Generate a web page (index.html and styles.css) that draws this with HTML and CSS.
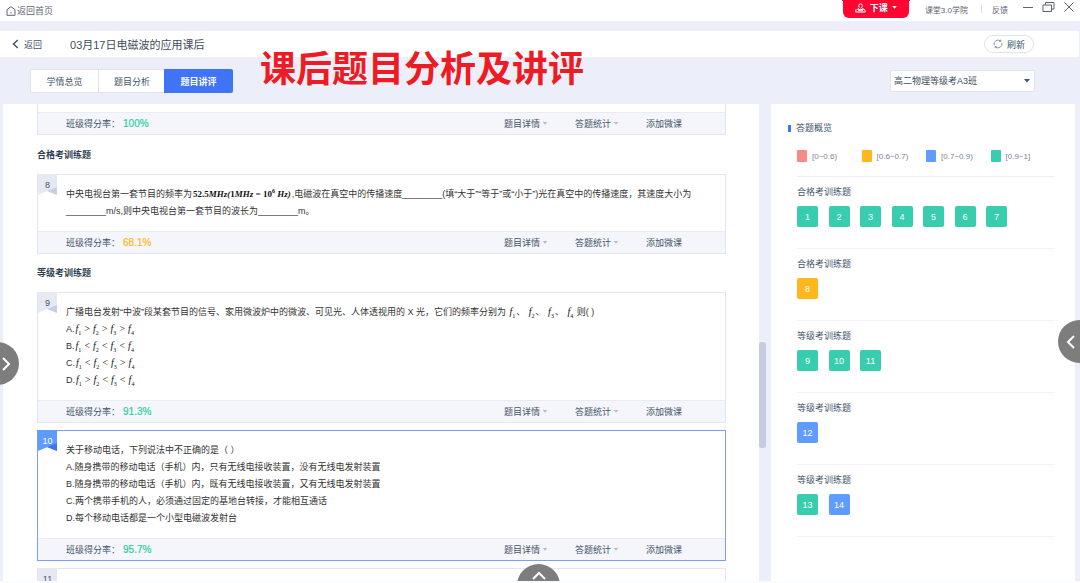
FILE: index.html
```
<!DOCTYPE html>
<html lang="zh-CN">

<head>
  <meta charset="UTF-8">
  <meta name="viewport" content="width=device-width, initial-scale=1.0">
  <title>03月17日电磁波的应用课后</title>
  <link rel="stylesheet" href="styles.css">
</head>

<body>

  <!-- shared shapes -->
  <svg class="defs" width="0" height="0" aria-hidden="true">
    <symbol id="ribbon" viewBox="0 0 19 21">
      <path class="ribbon-main" d="M0 0H19V21L9.500 17L0 21Z" />
      <path class="ribbon-fold" d="M9 17L19 13V21Z" />
    </symbol>
    <symbol id="caret" viewBox="0 0 6 4">
      <path d="M0 0H6L3 3.500Z" />
    </symbol>
  </svg>

  <header class="topbar">
    <a href="#" class="home">
      <svg width="10" height="10" viewBox="0 0 10 10"><path d="M1 3.600L5 .7L9 3.600V9.300H1ZM5 6V7.500" /></svg>
      返回首页
    </a>
    <div class="topbar-right">
      <button type="button" class="end-class">
        <svg width="11" height="10" viewBox="0 0 11 10"><path d="M3.800 4V2.500A1.700 1.700 0 0 1 7.200 2.500V3.500Q7 5 5.500 5.200M4.200 4.500L2.600 6.500H8.700L7.500 5M1 6.200L.7 9H10.300L9.500 6.200M3 7.700H8" /></svg>
        下课
        <svg class="caret" width="5" height="3"><use href="#caret" /></svg>
      </button>
      <a href="#" class="top-link">课堂3.0学院</a>
      <span class="sep"></span>
      <a href="#" class="top-link">反馈</a>
      <div class="window-buttons">
        <button type="button" aria-label="最小化"><svg width="12" height="12" viewBox="0 0 12 12"><path d="M1 6.500H11" /></svg></button>
        <button type="button" aria-label="还原"><svg width="13" height="12" viewBox="0 0 13 12"><path d="M1 4H9.500V10.500H1ZM3.500 4V1.500H12V8H9.500" /></svg></button>
        <button type="button" aria-label="关闭"><svg width="12" height="12" viewBox="0 0 12 12"><path d="M1.500 1.500L10.500 10.500M10.500 1.500L1.500 10.500" /></svg></button>
      </div>
    </div>
  </header>

  <div class="titlebar">
    <a href="#" class="back">
      <svg width="7" height="10" viewBox="0 0 7 10"><path d="M5.800 1L1.500 5L5.800 9" /></svg>
      返回
    </a>
    <h1>03月17日电磁波的应用课后</h1>
    <button type="button" class="refresh">
      <svg width="10" height="10" viewBox="0 0 10 10"><path d="M1.200 6.200A4 4 0 0 1 7.500 1.900M8.800 3.800A4 4 0 0 1 2.500 8.100M6.200 2.500L8 2.200L7.500 .7M3.800 7.500L2 7.800L2.500 9.300" /></svg>
      刷新
    </button>
  </div>

  <div class="toolbar">
    <nav class="tabs">
      <button type="button">学情总览</button>
      <button type="button">题目分析</button>
      <button type="button" class="active">题目讲评</button>
    </nav>
    <div class="class-select">
      <select aria-label="班级">
        <option>高二物理等级考A3班</option>
      </select>
      <svg class="caret" width="6" height="4"><use href="#caret" /></svg>
    </div>
  </div>

  <div class="banner">课后题目分析及讲评</div>

  <div class="content">
    <main class="questions">

      <article class="card cut">
        <div class="card-body"></div>
        <footer class="card-footer">
          <span>班级得分率：</span><b class="rate">100%</b>
          <div class="actions">
            <button type="button">题目详情<svg class="caret" width="6" height="3"><use href="#caret" /></svg></button>
            <button type="button">答题统计<svg class="caret" width="6" height="3"><use href="#caret" /></svg></button>
            <button type="button">添加微课</button>
          </div>
        </footer>
      </article>

      <h2>合格考训练题</h2>

      <article class="card">
        <div class="badge"><svg><use href="#ribbon" /></svg><span>8</span></div>
        <div class="card-body">
          <p>中央电视台第一套节目的频率为<span class="math strong"><span class="num">52.5</span>MHz(<span class="num">1</span>MHz = <span class="num">10</span><sup>6</sup> Hz)</span>,电磁波在真空中的传播速度________(填“大于”“等于”或“小于”)光在真空中的传播速度，其速度大小为</p>
          <p>________m/s,则中央电视台第一套节目的波长为________m。</p>
        </div>
        <footer class="card-footer">
          <span>班级得分率：</span><b class="rate mid">68.1%</b>
          <div class="actions">
            <button type="button">题目详情<svg class="caret" width="6" height="3"><use href="#caret" /></svg></button>
            <button type="button">答题统计<svg class="caret" width="6" height="3"><use href="#caret" /></svg></button>
            <button type="button">添加微课</button>
          </div>
        </footer>
      </article>

      <h2>等级考训练题</h2>

      <article class="card">
        <div class="badge"><svg><use href="#ribbon" /></svg><span>9</span></div>
        <div class="card-body">
          <p>广播电台发射“中波”段某套节目的信号、家用微波炉中的微波、可见光、人体透视用的 X 光，它们的频率分别为 <i class="math">f<sub>1</sub></i>、 <i class="math">f<sub>2</sub></i>、 <i class="math">f<sub>3</sub></i>、 <i class="math">f<sub>4</sub></i> 则( )</p>
          <p>A.<span class="math">f<sub>1</sub> &gt; f<sub>2</sub> &gt; f<sub>3</sub> &gt; f<sub>4</sub></span></p>
          <p>B.<span class="math">f<sub>1</sub> &lt; f<sub>2</sub> &lt; f<sub>3</sub> &lt; f<sub>4</sub></span></p>
          <p>C.<span class="math">f<sub>1</sub> &lt; f<sub>2</sub> &lt; f<sub>3</sub> &gt; f<sub>4</sub></span></p>
          <p>D.<span class="math">f<sub>1</sub> &gt; f<sub>2</sub> &lt; f<sub>3</sub> &lt; f<sub>4</sub></span></p>
        </div>
        <footer class="card-footer">
          <span>班级得分率：</span><b class="rate">91.3%</b>
          <div class="actions">
            <button type="button">题目详情<svg class="caret" width="6" height="3"><use href="#caret" /></svg></button>
            <button type="button">答题统计<svg class="caret" width="6" height="3"><use href="#caret" /></svg></button>
            <button type="button">添加微课</button>
          </div>
        </footer>
      </article>

      <article class="card selected">
        <div class="badge"><svg><use href="#ribbon" /></svg><span>10</span></div>
        <div class="card-body">
          <p>关于移动电话，下列说法中不正确的是（ ）</p>
          <p>A.随身携带的移动电话（手机）内，只有无线电接收装置，没有无线电发射装置</p>
          <p>B.随身携带的移动电话（手机）内，既有无线电接收装置，又有无线电发射装置</p>
          <p>C.两个携带手机的人，必须通过固定的基地台转接，才能相互通话</p>
          <p>D.每个移动电话都是一个小型电磁波发射台</p>
        </div>
        <footer class="card-footer">
          <span>班级得分率：</span><b class="rate">95.7%</b>
          <div class="actions">
            <button type="button">题目详情<svg class="caret" width="6" height="3"><use href="#caret" /></svg></button>
            <button type="button">答题统计<svg class="caret" width="6" height="3"><use href="#caret" /></svg></button>
            <button type="button">添加微课</button>
          </div>
        </footer>
      </article>

      <article class="card">
        <div class="badge"><svg><use href="#ribbon" /></svg><span>11</span></div>
        <div class="card-body"></div>
      </article>
    </main>

    <div class="scrollbar"><div class="thumb"></div></div>

    <aside class="overview">
      <h3>答题概览</h3>
      <ul class="legend">
        <li><i class="red"></i>[0~0.6)</li>
        <li><i class="yellow"></i>[0.6~0.7)</li>
        <li><i class="blue"></i>[0.7~0.9)</li>
        <li><i class="green"></i>[0.9~1]</li>
      </ul>
      <section>
        <h4>合格考训练题</h4>
        <div class="tiles">
          <button type="button" class="green">1</button>
          <button type="button" class="green">2</button>
          <button type="button" class="green">3</button>
          <button type="button" class="green">4</button>
          <button type="button" class="green">5</button>
          <button type="button" class="green">6</button>
          <button type="button" class="green">7</button>
        </div>
      </section>
      <section>
        <h4>合格考训练题</h4>
        <div class="tiles">
          <button type="button" class="yellow">8</button>
        </div>
      </section>
      <section>
        <h4>等级考训练题</h4>
        <div class="tiles">
          <button type="button" class="green">9</button>
          <button type="button" class="green">10</button>
          <button type="button" class="green">11</button>
        </div>
      </section>
      <section>
        <h4>等级考训练题</h4>
        <div class="tiles">
          <button type="button" class="blue">12</button>
        </div>
      </section>
      <section>
        <h4>等级考训练题</h4>
        <div class="tiles">
          <button type="button" class="green">13</button>
          <button type="button" class="blue">14</button>
        </div>
      </section>
    </aside>
  </div>

  <!-- floating page controls -->
  <button type="button" class="round left" aria-label="展开左侧"><svg width="10" height="14" viewBox="0 0 10 14"><path d="M2 1L8 7L2 13" /></svg></button>
  <button type="button" class="round right" aria-label="展开右侧"><svg width="10" height="14" viewBox="0 0 10 14"><path d="M8 1L2 7L8 13" /></svg></button>
  <button type="button" class="round bottom" aria-label="展开底部"><svg width="14" height="10" viewBox="0 0 14 10"><path d="M1 8L7 2L13 8" /></svg></button>

</body>

</html>
```
FILE: styles.css
```
* {
  box-sizing: border-box;
}

body {
  margin: 0;
  height: 100vh;
  display: flex;
  flex-direction: column;
  overflow: hidden;
  position: relative;
  border-bottom: 2px solid #fbfcff;
  background: #eceff9;
  color: #44546a;
  font-family: "Liberation Sans", "Noto Sans CJK SC", sans-serif;
  font-size: 9px;
}

h1, h2, h3, h4, p, ul {
  margin: 0;
  padding: 0;
}

button {
  padding: 0;
  border: none;
  background: none;
  color: inherit;
  font: inherit;
  cursor: pointer;
}

a {
  color: inherit;
  text-decoration: none;
}

svg {
  flex: none;
  fill: none;
  stroke: currentColor;
}

.defs {
  position: absolute;
}

.caret {
  fill: currentColor;
  stroke: none;
}

/* top bar */
.topbar {
  flex: none;
  display: flex;
  justify-content: space-between;
  height: 21px;
  padding: 0 5px 0 6px;
  background: #fff;
  color: #5f6673;
}

.home {
  display: flex;
  align-items: center;
  gap: 1px;
}

.topbar-right {
  display: flex;
  align-items: center;
  height: 18px;
}

.end-class {
  position: relative;
  display: flex;
  align-items: center;
  justify-content: center;
  gap: 4px;
  width: 66px;
  height: 18px;
  padding-bottom: 3px;
  margin-right: 16px;
  border-radius: 0 0 6px 6px;
  background: #ff0532;
  color: #fff;
  font-weight: bold;
}

/* flared corners where the tab meets the window edge */
.end-class::before,
.end-class::after {
  content: "";
  position: absolute;
  top: 0;
  width: 3px;
  height: 3px;
}

.end-class::before {
  right: 100%;
  background: radial-gradient(circle at 0 100%, transparent 3px, #ff0532 3px);
}

.end-class::after {
  left: 100%;
  background: radial-gradient(circle at 100% 100%, transparent 3px, #ff0532 3px);
}

.top-link {
  font-size: 8px;
}

.sep {
  width: 1px;
  height: 8px;
  margin: 0 10px 0 13px;
  background: #dcdfe6;
}

.window-buttons {
  display: flex;
  gap: 8px;
  margin-left: 14px;
  padding-bottom: 4px;
  color: #5c6575;
}

.window-buttons button,
.window-buttons svg {
  display: block;
}

/* title bar */
.titlebar {
  flex: none;
  display: flex;
  align-items: center;
  height: 26px;
  margin: 10px 1px 0 0;
  padding: 0 45px 0 12px;
  background: #fff;
}

.back {
  display: flex;
  align-items: center;
  gap: 5px;
  margin-right: 28px;
}

.back svg {
  stroke-width: 1.500;
}

.titlebar h1 {
  font-size: 11px;
  font-weight: normal;
  color: #3d4c60;
}

.refresh {
  display: flex;
  align-items: center;
  justify-content: center;
  gap: 4px;
  width: 50px;
  height: 18px;
  margin-left: auto;
  border: 1px solid #dfe3f1;
  border-radius: 9px;
}

.refresh svg {
  color: #8d96a6;
}

/* tabs and class picker */
.toolbar {
  flex: none;
  display: flex;
  align-items: center;
  justify-content: space-between;
  height: 47px;
  padding: 1px 45px 0 30px;
}

.tabs {
  display: flex;
  border: 1px solid #e0e3ec;
  border-radius: 2px;
  background: #fff;
}

.tabs button {
  width: 67px;
  height: 22px;
}

.tabs button + button {
  border-left: 1px solid #e0e3ec;
}

.tabs .active {
  margin: -1px;
  width: 69px;
  height: 24px;
  border: none;
  border-radius: 0 2px 2px 0;
  background: #4074f6;
  color: #fff;
  font-weight: bold;
}

.class-select {
  position: relative;
}

.class-select select {
  appearance: none;
  width: 145px;
  height: 22px;
  padding: 0 20px 0 3px;
  border: 1px solid #dfe3ee;
  border-radius: 2px;
  background: #fff;
  color: #3d4c60;
  font: inherit;
}

.class-select .caret {
  position: absolute;
  top: 9px;
  right: 5px;
}

/* caption laid over the page */
.banner {
  position: absolute;
  top: 44px;
  left: 260px;
  color: #ed1c24;
  font-size: 36px;
  font-weight: bold;
  line-height: 52px;
  white-space: nowrap;
}

/* columns */
.content {
  flex: 1;
  display: flex;
  min-height: 0;
  padding: 0 5px 0 3px;
}

.questions {
  flex: 1;
  min-width: 0;
  padding: 0 33px 0 34px;
  overflow: hidden;
  background: #fff;
}

.questions h2 {
  font-size: 9px;
  line-height: 38px;
  color: #2c3e50;
}

.card {
  position: relative;
  border: 1px solid #e3e6f1;
}

.card + .card {
  margin-top: 7px;
}

.card-body {
  padding: 11px 28px;
  color: #333;
  line-height: 17px;
}

.card-body p {
  height: 17px;
  white-space: nowrap;
}

.cut {
  margin-bottom: 1px;
  border-top: none;
}

.cut .card-body {
  height: 8px;
  padding: 0;
}

.card-footer {
  display: flex;
  align-items: center;
  height: 22px;
  padding: 0 43px 0 28px;
  border-top: 1px solid #e9ecf4;
  background: #f5f6fb;
}

.rate {
  margin-left: 3px;
  color: #2ccda6;
  font-size: 10px;
  font-weight: normal;
  -webkit-text-stroke: 0.2px;
}

.rate.mid {
  color: #fdb81e;
}

.actions {
  display: flex;
  gap: 27px;
  margin-left: auto;
}

.actions button {
  display: flex;
  align-items: center;
  gap: 2px;
}

.actions .caret {
  color: #b4bac6;
}

.badge {
  position: absolute;
  top: -1px;
  left: 0;
  width: 19px;
  height: 21px;
  text-align: center;
  line-height: 22px;
}

.badge svg {
  position: absolute;
  inset: 0;
  width: 19px;
  height: 21px;
  stroke: none;
}

.badge span {
  position: relative;
}

.ribbon-main {
  fill: var(--ribbon, #e6e9f4);
}

.ribbon-fold {
  fill: var(--fold, #c9cfe3);
}

.selected {
  border-color: #7f9df5;
  --ribbon: #5e9bff;
  --fold: #4074f6;
}

.selected .badge {
  color: #fff;
}

.math {
  margin: 0 1px;
  font-family: "Liberation Serif", serif;
  font-style: italic;
  font-size: 10px;
  line-height: 1;
  color: #111;
}

.math.strong {
  font-weight: bold;
  font-size: 9px;
}

.num,
sub,
sup {
  font-style: normal;
}

sub,
sup {
  font-size: 6px;
  line-height: 0;
}

.scrollbar {
  flex: none;
  width: 12px;
  padding-top: 238px;
}

.thumb {
  width: 7px;
  height: 106px;
  border-radius: 3px;
  background: #c5cbe0;
}

/* overview */
.overview {
  flex: none;
  width: 304px;
  padding: 16px 20px 0 26px;
  background: #fff;
}

.overview h3 {
  display: flex;
  align-items: center;
  gap: 5px;
  margin-left: -9px;
  font-size: 9px;
  font-weight: normal;
  line-height: 16px;
}

.overview h3::before {
  content: "";
  width: 3px;
  height: 7px;
  background: #4074f6;
}

.legend {
  display: grid;
  grid-template-columns: repeat(4, 1fr);
  height: 41px;
  border-bottom: 1px solid #eceef6;
  align-items: center;
  list-style: none;
  font-size: 8px;
  color: #7c8492;
}

.legend li {
  display: flex;
  align-items: center;
  gap: 5px;
}

.legend i {
  width: 10px;
  height: 12px;
  border-radius: 1px;
}

.overview section {
  height: 72px;
  padding-top: 7px;
  border-bottom: 1px solid #f1f3f8;
}

.overview h4 {
  font-size: 9px;
  font-weight: normal;
  line-height: 16px;
}

.tiles {
  display: grid;
  grid-template-columns: repeat(7, 21px);
  justify-content: space-between;
  width: 210px;
  margin-top: 6px;
}

.tiles button {
  height: 21px;
  border-radius: 2px;
  color: #fff;
}

.red { background: #f88a88; }
.yellow { background: #ffb81c; }
.blue { background: #609cff; }
.green { background: #38cdae; }

/* floating round buttons, half outside the window */
.round {
  position: absolute;
  display: flex;
  align-items: center;
  width: 43px;
  height: 43px;
  border-radius: 50%;
  background: #7d7d7d;
  color: #fff;
}

.round svg {
  stroke-width: 2;
}

.round.left {
  top: 342px;
  left: -24px;
  justify-content: flex-end;
  padding-right: 8px;
}

.round.right {
  top: 320px;
  right: -21px;
  padding-left: 8px;
}

.round.bottom {
  bottom: -26px;
  left: 517px;
  align-items: flex-start;
  justify-content: center;
  padding-top: 7px;
}
```
